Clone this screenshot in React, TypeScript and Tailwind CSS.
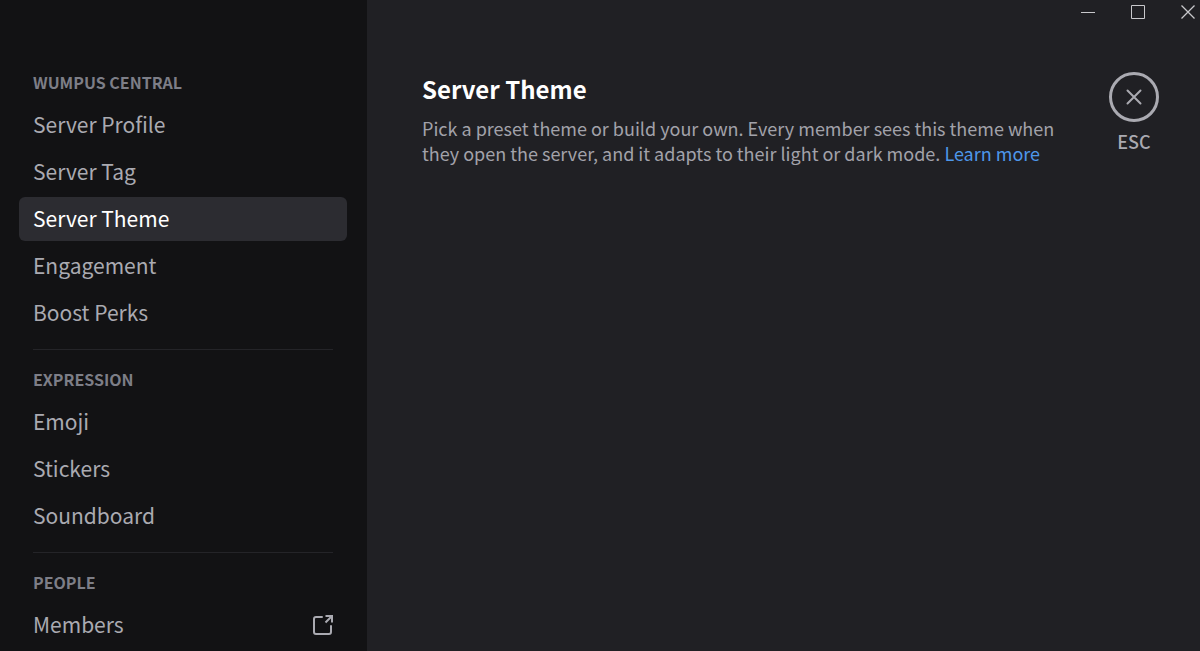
type NavItem = {
  label: string
  external?: boolean
}

type NavSection = {
  title: string
  items: NavItem[]
}

const ACTIVE_ITEM = "Server Theme"

const SECTIONS: NavSection[] = [
  {
    title: "Wumpus Central",
    items: [
      { label: "Server Profile" },
      { label: "Server Tag" },
      { label: "Server Theme" },
      { label: "Engagement" },
      { label: "Boost Perks" },
    ],
  },
  {
    title: "Expression",
    items: [{ label: "Emoji" }, { label: "Stickers" }, { label: "Soundboard" }],
  },
  {
    title: "People",
    items: [{ label: "Members", external: true }],
  },
]

function ExternalIcon() {
  return (
    <svg width="20" height="20" viewBox="0 0 20 20" fill="none" stroke="currentColor" strokeWidth="2" aria-hidden="true">
      <path d="M9 2H3a2 2 0 0 0-2 2v13a2 2 0 0 0 2 2h13a2 2 0 0 0 2-2v-6" strokeLinecap="round" />
      <path d="M12.5 1H19v6.5M19 1l-6.5 6.5" />
    </svg>
  )
}

function SettingsSidebar() {
  return (
    <nav aria-label="Server settings" className="w-[367px] shrink-0 bg-[#121214] pt-[72px] pr-5 pl-[19px]">
      {SECTIONS.map((section, index) => (
        <section key={section.title}>
          {index > 0 && <hr className="mx-[14px] mt-[14px] mb-[19px] border-[#242428]" />}
          <h2 className="mb-[11px] px-[14px] text-base leading-5 font-bold text-[#7d7e87] uppercase">
            {section.title}
          </h2>
          <ul className="flex flex-col gap-[3px]">
            {section.items.map((item) => {
              const active = item.label === ACTIVE_ITEM
              return (
                <li key={item.label}>
                  <button
                    type="button"
                    aria-current={active ? "page" : undefined}
                    className={`flex h-11 w-full items-center justify-between rounded-md px-[14px] text-left text-[21px] leading-7 ${
                      active ? "bg-[#2c2c31] text-white" : "text-[#aaaab1]"
                    }`}
                  >
                    <span className="pb-[3px]">{item.label}</span>
                    {item.external && <ExternalIcon />}
                  </button>
                </li>
              )
            })}
          </ul>
        </section>
      ))}
    </nav>
  )
}

function WindowControls() {
  return (
    <div className="flex h-6 items-center justify-end gap-9 pr-[5px] text-[#c8c8cc]">
      <button type="button" aria-label="Minimize">
        <svg className="block" width="14" height="14" viewBox="0 0 14 14" stroke="currentColor">
          <path d="M0 7.5h14" />
        </svg>
      </button>
      <button type="button" aria-label="Maximize">
        <svg className="block" width="14" height="14" viewBox="0 0 14 14" fill="none" stroke="currentColor">
          <path d="M.5 .5h13v13H.5z" />
        </svg>
      </button>
      <button type="button" aria-label="Close window">
        <svg className="block" width="14" height="14" viewBox="0 0 14 14" stroke="currentColor" strokeWidth="1.25">
          <path d="M.5 .5l13 13M13.5 .5l-13 13" />
        </svg>
      </button>
    </div>
  )
}

function CloseSettings() {
  return (
    <button type="button" aria-label="Close settings, ESC" className="flex shrink-0 flex-col items-center gap-[7px] text-[#aaaab1]">
      <span className="flex size-[50px] items-center justify-center rounded-full border-3 border-current">
        <svg width="16" height="16" viewBox="0 0 16 16" stroke="currentColor" strokeWidth="2" strokeLinecap="round">
          <path d="M1.5 1.5l13 13M14.5 1.5l-13 13" />
        </svg>
      </span>
      <span className="text-lg leading-6 font-medium">ESC</span>
    </button>
  )
}

export default function App() {
  return (
    <div className="flex h-screen overflow-hidden bg-[#202024] font-['Noto_Sans_CJK_SC','Noto_Sans',sans-serif]">
      <SettingsSidebar />
      <main className="min-w-0 flex-1">
        <WindowControls />
        <div className="flex items-start justify-between gap-10 pt-12 pr-[41px] pl-[55px]">
          <div className="max-w-[640px]">
            <h1 className="text-2xl leading-[34px] font-bold text-white">Server Theme</h1>
            <p className="mt-[10px] text-lg leading-[25px] text-[#a2a2aa]">
              Pick a preset theme or build your own. Every member sees this theme when they open the server, and it
              adapts to their light or dark mode.{" "}
              <a href="#learn-more" className="text-[#4e97ea]">
                Learn more
              </a>
            </p>
          </div>
          <CloseSettings />
        </div>
      </main>
    </div>
  )
}
